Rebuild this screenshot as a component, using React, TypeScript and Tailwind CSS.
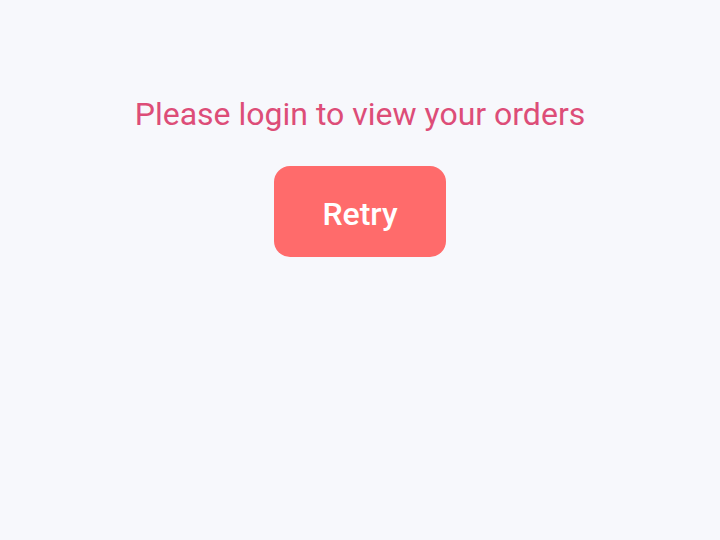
import React from 'react';

export default function App() {
  return (
    <div
      className="min-h-[540px] w-full bg-[#f7f8fc] flex flex-col items-center pt-[94px]"
      style={{ fontFamily: 'Roboto, "Noto Sans", sans-serif' }}
    >
      <p className="text-[32px] leading-[40px] text-[#dd4d78]">Please login to view your orders</p>
      <button className="mt-[32px] w-[172px] h-[91px] pt-[4px] rounded-[16px] bg-[#ff6b6b] text-white text-[32px] font-medium">
        Retry
      </button>
    </div>
  );
}
